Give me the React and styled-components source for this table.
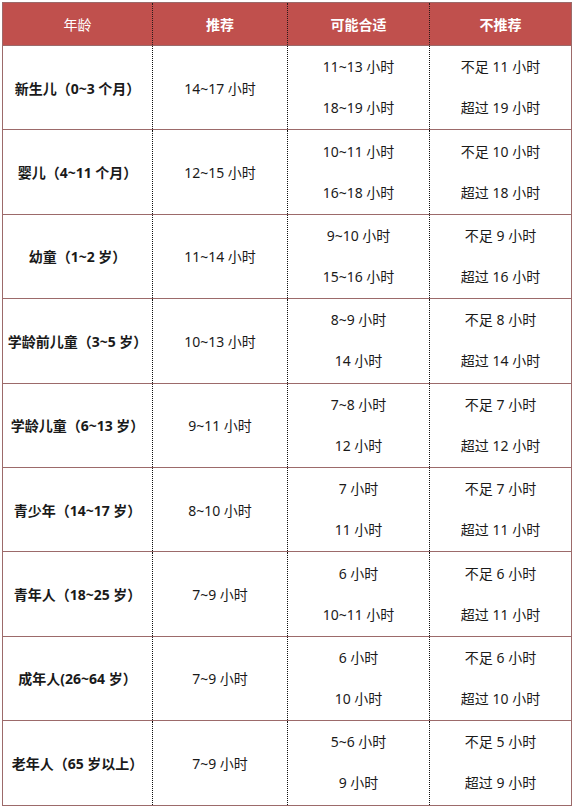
import React from "react";
import styled, {createGlobalStyle} from "styled-components";

const GlobalStyle = createGlobalStyle`
    body {
        margin: 0;
        background: #fff;
        font-family: "Noto Sans", "Noto Sans CJK SC", sans-serif;
    }
`

const rows = [
    {age: '新生儿（0~3 个月）', rec: '14~17 小时', may: ['11~13 小时', '18~19 小时'], not: ['不足 11 小时', '超过 19 小时']},
    {age: '婴儿（4~11 个月）', rec: '12~15 小时', may: ['10~11 小时', '16~18 小时'], not: ['不足 10 小时', '超过 18 小时']},
    {age: '幼童（1~2 岁）', rec: '11~14 小时', may: ['9~10 小时', '15~16 小时'], not: ['不足 9 小时', '超过 16 小时']},
    {age: '学龄前儿童（3~5 岁）', rec: '10~13 小时', may: ['8~9 小时', '14 小时'], not: ['不足 8 小时', '超过 14 小时']},
    {age: '学龄儿童（6~13 岁）', rec: '9~11 小时', may: ['7~8 小时', '12 小时'], not: ['不足 7 小时', '超过 12 小时']},
    {age: '青少年（14~17 岁）', rec: '8~10 小时', may: ['7 小时', '11 小时'], not: ['不足 7 小时', '超过 11 小时']},
    {age: '青年人（18~25 岁）', rec: '7~9 小时', may: ['6 小时', '10~11 小时'], not: ['不足 6 小时', '超过 11 小时']},
    {age: '成年人(26~64 岁）', rec: '7~9 小时', may: ['6 小时', '10 小时'], not: ['不足 6 小时', '超过 10 小时']},
    {age: '老年人（65 岁以上）', rec: '7~9 小时', may: ['5~6 小时', '9 小时'], not: ['不足 5 小时', '超过 9 小时']},
]

const App = () => {
    return (
        <>
            <GlobalStyle/>
            <Page>
                <Table>
                    <colgroup>
                        <col style={{width: 150}}/>
                        <col style={{width: 135}}/>
                        <col style={{width: 142}}/>
                        <col style={{width: 142}}/>
                    </colgroup>
                    <thead>
                    <tr>
                        <HeadCell $light>年龄</HeadCell>
                        <HeadCell>推荐</HeadCell>
                        <HeadCell>可能合适</HeadCell>
                        <HeadCell>不推荐</HeadCell>
                    </tr>
                    </thead>
                    <tbody>
                    {rows.map((r) => (
                        <Row key={r.age}>
                            <Cell $bold>{r.age}</Cell>
                            <Cell>{r.rec}</Cell>
                            <Cell>
                                <Pair>
                                    {r.may.map((t) => <span key={t}>{t}</span>)}
                                </Pair>
                            </Cell>
                            <Cell>
                                <Pair>
                                    {r.not.map((t) => <span key={t}>{t}</span>)}
                                </Pair>
                            </Cell>
                        </Row>
                    ))}
                    </tbody>
                </Table>
            </Page>
        </>
    )
}

const Page = styled.div`
    padding: 2px 0 0 2px;
`

const Table = styled.table`
    width: 569px;
    border-collapse: collapse;
    table-layout: fixed;
    border: 1px solid #9c6a6a;
    color: #1a1a1a;
    font-size: 14px;
`

const HeadCell = styled.th`
    height: 42px;
    padding: 0;
    background: #c0504d;
    color: #fff;
    font-weight: ${p => p.$light ? 400 : 700};
    text-align: center;
    border-left: 1px dotted #2a1a1a;
    border-bottom: 1px solid #9c6a6a;
    &:first-child {
        border-left: 1px solid #9c6a6a;
    }
`

const Row = styled.tr`
    height: 84.4px;
    border-bottom: 1px solid #9c6a6a;
`

const Cell = styled.td`
    padding: 0;
    text-align: center;
    vertical-align: middle;
    font-weight: ${p => p.$bold ? 700 : 400};
    border-left: 1px dotted #111;
    &:first-child {
        border-left: 1px solid #9c6a6a;
    }
`

const Pair = styled.div`
    display: flex;
    flex-direction: column;
    align-items: center;
    gap: 21px;
    line-height: 20px;
`

export default App
